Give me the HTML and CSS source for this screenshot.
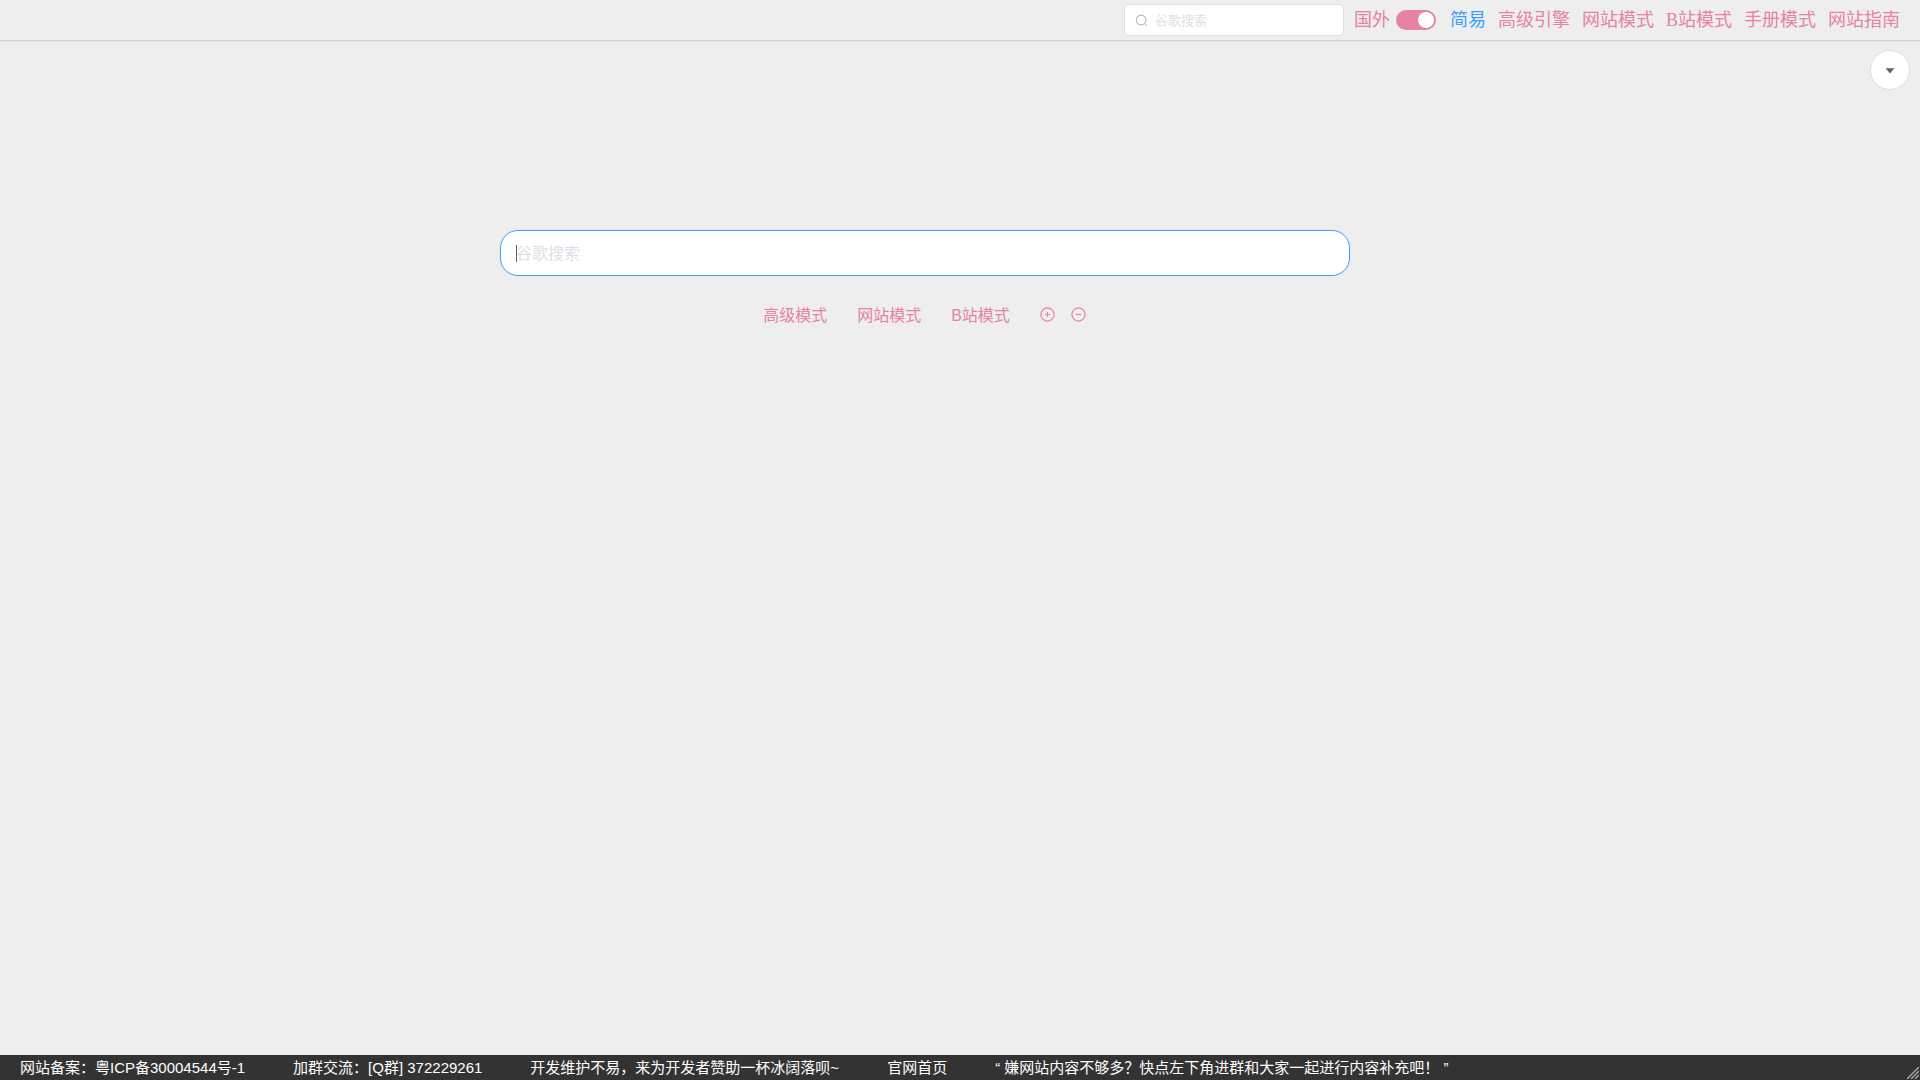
FILE: index.html
```html
<!DOCTYPE html>
<html lang="zh-CN">
<head>
  <meta charset="utf-8">
  <meta name="viewport" content="width=device-width, initial-scale=1">
  <title>谷歌搜索</title>
  <link rel="stylesheet" href="styles.css">
</head>
<body>
  <header class="topbar">
    <label class="quick-search">
      <svg class="quick-search-icon" viewBox="0 0 1024 1024" aria-hidden="true"><path fill="currentColor" d="m795.904 750.72 124.992 124.928a32 32 0 0 1-45.248 45.248L750.656 795.904a416 416 0 1 1 45.248-45.248zM480 832a352 352 0 1 0 0-704 352 352 0 0 0 0 704z"/></svg>
      <input class="quick-search-input" type="text" placeholder="谷歌搜索" aria-label="谷歌搜索">
    </label>
    <label class="region">
      <span>国外</span>
      <input class="switch" type="checkbox" role="switch" checked>
    </label>
    <nav class="nav">
      <a class="nav-link nav-link-active" href="#">简易</a>
      <a class="nav-link" href="#">高级引擎</a>
      <a class="nav-link" href="#">网站模式</a>
      <a class="nav-link" href="#">B站模式</a>
      <a class="nav-link" href="#">手册模式</a>
      <a class="nav-link" href="#">网站指南</a>
    </nav>
  </header>

  <main class="content">
    <section class="search">
      <div class="search-box">
        <input class="search-input" type="text" placeholder="谷歌搜索" aria-label="谷歌搜索">
        <span class="caret"></span>
      </div>
      <div class="modes">
        <a class="mode-link" href="#">高级模式</a>
        <a class="mode-link" href="#">网站模式</a>
        <a class="mode-link" href="#">B站模式</a>
        <div class="zoom">
          <button class="icon-button" type="button" aria-label="增加">
            <svg viewBox="0 0 16 16" fill="none" stroke="currentColor" stroke-width="1.2"><circle cx="7.5" cy="7.5" r="6.6"/><path d="M5 7.5h5M7.5 5v5"/></svg>
          </button>
          <button class="icon-button" type="button" aria-label="减少">
            <svg viewBox="0 0 16 16" fill="none" stroke="currentColor" stroke-width="1.2"><circle cx="7.5" cy="7.5" r="6.6"/><path d="M5 7.5h5"/></svg>
          </button>
        </div>
      </div>
    </section>
    <aside class="side">
      <button class="round-button" type="button" aria-label="展开">
        <svg viewBox="0 0 1024 1024" aria-hidden="true"><path fill="currentColor" d="m192 384 320 384 320-384z"/></svg>
      </button>
    </aside>
  </main>

  <footer class="footer">
    <a class="footer-link" href="#">网站备案：粤ICP备30004544号-1</a>
    <a class="footer-link" href="#">加群交流：[Q群] 372229261</a>
    <a class="footer-link" href="#">开发维护不易，来为开发者赞助一杯冰阔落呗~</a>
    <a class="footer-link" href="#">官网首页</a>
    <span>“ 嫌网站内容不够多？快点左下角进群和大家一起进行内容补充吧！ ”</span>
    <svg class="grip" viewBox="0 0 12 12" fill="none" stroke="currentColor" stroke-width="1.4" aria-hidden="true"><path d="M0 12 12 0M4 12l8-8M8 12l4-4"/></svg>
  </footer>
</body>
</html>
```

FILE: styles.css
```css
:root {
  --pink: #e582a5;
  --blue: #409eff;
  --border: #dcdfe6;
  --hint: #dcdfe6;
  --sans: "Liberation Sans", "Noto Sans CJK SC", sans-serif;
  --serif: "Liberation Serif", "Noto Sans CJK SC", serif;
}

* {
  box-sizing: border-box;
}

body {
  display: flex;
  flex-direction: column;
  min-height: 100vh;
  margin: 0;
  background: #eee;
  font-family: var(--sans);
}

a {
  color: inherit;
  text-decoration: none;
}

button {
  padding: 0;
  border: 0;
  background: none;
  color: inherit;
  cursor: pointer;
}

input::placeholder {
  color: var(--hint);
  opacity: 1;
}

.topbar {
  display: flex;
  align-items: center;
  justify-content: flex-end;
  height: 41px;
  padding: 0 20px;
  border-bottom: 1px solid #d4d4d4;
  box-shadow: 0 1px 1px #e6e6e6;
  color: var(--pink);
  font-family: var(--serif);
  font-size: 18px;
  line-height: 26px;
}

.quick-search {
  display: flex;
  align-items: center;
  gap: 7px;
  width: 220px;
  height: 32px;
  margin-right: 10px;
  padding: 0 10px;
  border: 1px solid var(--border);
  border-radius: 4px;
  background: #fff;
}

.quick-search-icon {
  flex: none;
  width: 13px;
  height: 13px;
  color: #a8abb2;
}

.quick-search-input {
  flex: 1;
  min-width: 0;
  padding: 0;
  border: 0;
  outline: 0;
  background: none;
  font-family: var(--sans);
  font-size: 13px;
}

.region {
  display: flex;
  align-items: center;
  gap: 6px;
  margin-right: 14px;
}

.switch {
  display: flex;
  align-items: center;
  justify-content: flex-end;
  width: 40px;
  height: 20px;
  margin: 0;
  padding: 2px;
  border-radius: 10px;
  background: var(--pink);
  appearance: none;
}

.switch::before {
  width: 16px;
  height: 16px;
  border-radius: 50%;
  background: #fff;
  content: "";
}

.switch:not(:checked) {
  justify-content: flex-start;
  background: var(--border);
}

.nav {
  display: flex;
  gap: 12px;
}

.nav-link-active {
  color: var(--blue);
}

.content {
  display: grid;
  flex: 1;
  grid-template-columns: 1fr 70px;
}

.search {
  padding-top: 189px;
}

.search-box {
  position: relative;
  width: 100%;
  max-width: 850px;
  margin: 0 auto;
}

.search-input {
  display: block;
  width: 100%;
  height: 46px;
  padding: 2px 15px 0;
  border: 1px solid var(--blue);
  border-radius: 18px;
  outline: 0;
  background: #fff;
  box-shadow: 0 0 3px rgb(0 0 0 / 5%);
  font-family: var(--sans);
  font-size: 16px;
}

.caret {
  position: absolute;
  top: 15px;
  left: 16px;
  width: 1px;
  height: 17px;
  background: #606266;
}

.modes {
  display: flex;
  align-items: flex-start;
  justify-content: center;
  gap: 30px;
  margin-top: 27px;
  color: var(--pink);
  font-size: 16px;
  line-height: 26px;
}

.zoom {
  display: flex;
  gap: 15px;
  padding-top: 4px;
}

.icon-button,
.icon-button svg {
  display: block;
  width: 16px;
  height: 16px;
}

.side {
  display: flex;
  align-items: flex-start;
  justify-content: flex-end;
  padding: 9px 10px;
}

.round-button {
  display: flex;
  align-items: center;
  justify-content: center;
  width: 40px;
  height: 40px;
  border: 1px solid var(--border);
  border-radius: 50%;
  background: #fff;
  color: #606266;
}

.round-button svg {
  width: 14px;
  height: 14px;
}

.footer {
  position: relative;
  display: flex;
  align-items: center;
  gap: 48px;
  height: 25px;
  padding: 0 20px;
  background: #333;
  color: #fff;
  font-size: 15px;
  line-height: 24px;
  white-space: nowrap;
}

.grip {
  position: absolute;
  right: 1px;
  bottom: 1px;
  width: 12px;
  height: 12px;
  color: #aaa;
}
```
